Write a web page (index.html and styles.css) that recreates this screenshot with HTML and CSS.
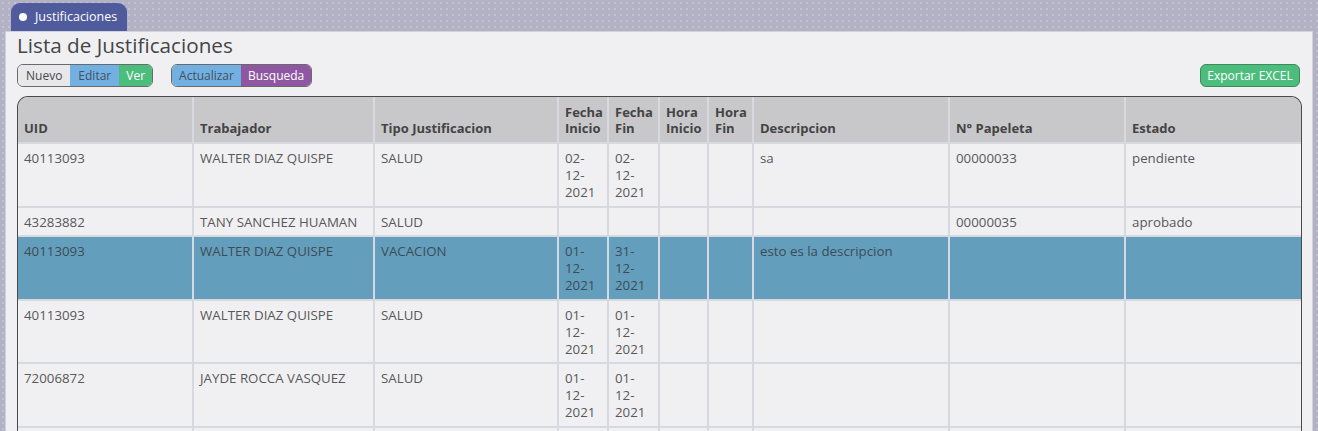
FILE: index.html
```html
<!DOCTYPE html>
<html lang="es">
<head>
<meta charset="utf-8">
<title>Lista de Justificaciones</title>
<link rel="stylesheet" href="styles.css">
</head>
<body>
<div class="tab"><span class="tab-dot"></span><span class="tab-label">Justificaciones</span></div>
<section class="panel">
  <h1 class="title">Lista de Justificaciones</h1>
  <div class="toolbar">
    <div class="btn-group">
      <button class="btn btn-gray">Nuevo</button>
      <button class="btn btn-blue">Editar</button>
      <button class="btn btn-green btn-tight">Ver</button>
    </div>
    <div class="btn-group">
      <button class="btn btn-blue btn-tight">Actualizar</button>
      <button class="btn btn-purple btn-tight">Busqueda</button>
    </div>
    <button class="btn btn-green btn-export">Exportar EXCEL</button>
  </div>
  <div class="grid">
    <table>
      <colgroup>
        <col class="c-uid"><col class="c-trab"><col class="c-tipo"><col class="c-fi"><col class="c-ff"><col class="c-hi"><col class="c-hf"><col class="c-desc"><col class="c-pap"><col class="c-est">
      </colgroup>
      <thead>
        <tr>
          <th>UID</th><th>Trabajador</th><th>Tipo Justificacion</th><th>Fecha Inicio</th><th>Fecha Fin</th><th>Hora Inicio</th><th>Hora Fin</th><th>Descripcion</th><th>N° Papeleta</th><th>Estado</th>
        </tr>
      </thead>
      <tbody>
        <tr>
          <td>40113093</td><td>WALTER DIAZ QUISPE</td><td>SALUD</td><td>02-12-2021</td><td>02-12-2021</td><td></td><td></td><td>sa</td><td>00000033</td><td>pendiente</td>
        </tr>
        <tr>
          <td>43283882</td><td>TANY SANCHEZ HUAMAN</td><td>SALUD</td><td></td><td></td><td></td><td></td><td></td><td>00000035</td><td>aprobado</td>
        </tr>
        <tr class="selected">
          <td>40113093</td><td>WALTER DIAZ QUISPE</td><td>VACACION</td><td>01-12-2021</td><td>31-12-2021</td><td></td><td></td><td>esto es la descripcion</td><td></td><td></td>
        </tr>
        <tr>
          <td>40113093</td><td>WALTER DIAZ QUISPE</td><td>SALUD</td><td>01-12-2021</td><td>01-12-2021</td><td></td><td></td><td></td><td></td><td></td>
        </tr>
        <tr>
          <td>72006872</td><td>JAYDE ROCCA VASQUEZ</td><td>SALUD</td><td>01-12-2021</td><td>01-12-2021</td><td></td><td></td><td></td><td></td><td></td>
        </tr>
        <tr class="empty-row">
          <td></td><td></td><td></td><td></td><td></td><td></td><td></td><td></td><td></td><td></td>
        </tr>
      </tbody>
    </table>
  </div>
</section>
</body>
</html>
```
FILE: styles.css
```css
html, body {
  margin: 0;
  padding: 0;
}
body {
  font-family: "Open Sans", "Noto Sans", sans-serif;
  background-color: #b3b2c5;
  background-image: radial-gradient(circle, #c2c1d2 0.8px, transparent 1.2px);
  background-size: 6px 6px;
  padding-top: 3px;
  overflow: hidden;
  height: 431px;
}
.tab {
  margin-left: 11px;
  width: 116px;
  height: 28px;
  box-sizing: border-box;
  background: #4f5b9d;
  border-radius: 9px 9px 0 0;
  display: flex;
  align-items: center;
  padding-left: 8px;
  gap: 8px;
}
.tab-dot {
  width: 8px;
  height: 8px;
  border-radius: 50%;
  background: #ffffff;
}
.tab-label {
  color: #ffffff;
  font-size: 12.5px;
  line-height: 16px;
}
.panel {
  margin-left: 5px;
  width: 1308px;
  box-sizing: border-box;
  min-height: 420px;
  background: #f0f0f3;
  border: 1px solid #d2d2da;
  padding: 0 10px 0 11px;
}
.title {
  margin: 0;
  font-size: 20.7px;
  line-height: 26px;
  font-weight: 400;
  color: #454545;
}
.toolbar {
  display: flex;
  align-items: center;
  gap: 18px;
  margin-top: 6px;
  height: 23px;
}
.btn-group {
  display: flex;
  height: 23px;
  border: 1px solid #6a6a6a;
  border-radius: 6px;
  overflow: hidden;
  box-sizing: border-box;
}
.btn {
  font-family: inherit;
  font-size: 12px;
  line-height: 21px;
  padding: 0 8px;
  margin: 0;
  border: none;
  cursor: pointer;
}
.btn-tight { padding: 0 7px; }
.btn-gray { background: #e8e8ea; color: #484848; }
.btn-blue { background: #72b0e2; color: #44505c; }
.btn-green { background: #4cbd7c; color: #ffffff; }
.btn-purple { background: #8f57a2; color: #ffffff; }
.btn-export {
  margin-left: auto;
  margin-right: 2px;
  height: 23px;
  width: 100px;
  padding: 0;
  border: 1px solid #3f8a5c;
  border-radius: 6px;
  box-sizing: border-box;
}
.grid {
  margin-top: 9px;
  width: 1285px;
  border: 1px solid #4a4a4a;
  border-bottom: none;
  border-radius: 11px 11px 0 0;
  overflow: hidden;
  box-sizing: border-box;
}
table {
  width: 1283px;
  table-layout: fixed;
  border-collapse: separate;
  border-spacing: 0;
}
.c-uid { width: 176px; }
.c-trab { width: 181px; }
.c-tipo { width: 184px; }
.c-fi { width: 50px; }
.c-ff { width: 51px; }
.c-hi { width: 49px; }
.c-hf { width: 45px; }
.c-desc { width: 196px; }
.c-pap { width: 176px; }
.c-est { width: 175px; }
th, td {
  border-right: 2px solid #d6d9df;
  border-bottom: 2px solid #d6d9df;
  text-align: left;
  padding: 0 6px;
}
th:last-child, td:last-child {
  border-right: none;
}
th {
  background: #c8c8cb;
  color: #444444;
  font-size: 13px;
  font-weight: 700;
  line-height: 16px;
  vertical-align: bottom;
  padding-top: 7px;
  padding-bottom: 6px;
  height: 32px;
}
td {
  background: #f0f0f3;
  color: #585858;
  font-size: 13.3px;
  line-height: 17px;
  vertical-align: top;
  padding-top: 6px;
  padding-bottom: 4.6px;
}
.empty-row td {
  height: 51px;
}
tr.selected td {
  background: #639fbd;
  color: #3e4b56;
}
```
